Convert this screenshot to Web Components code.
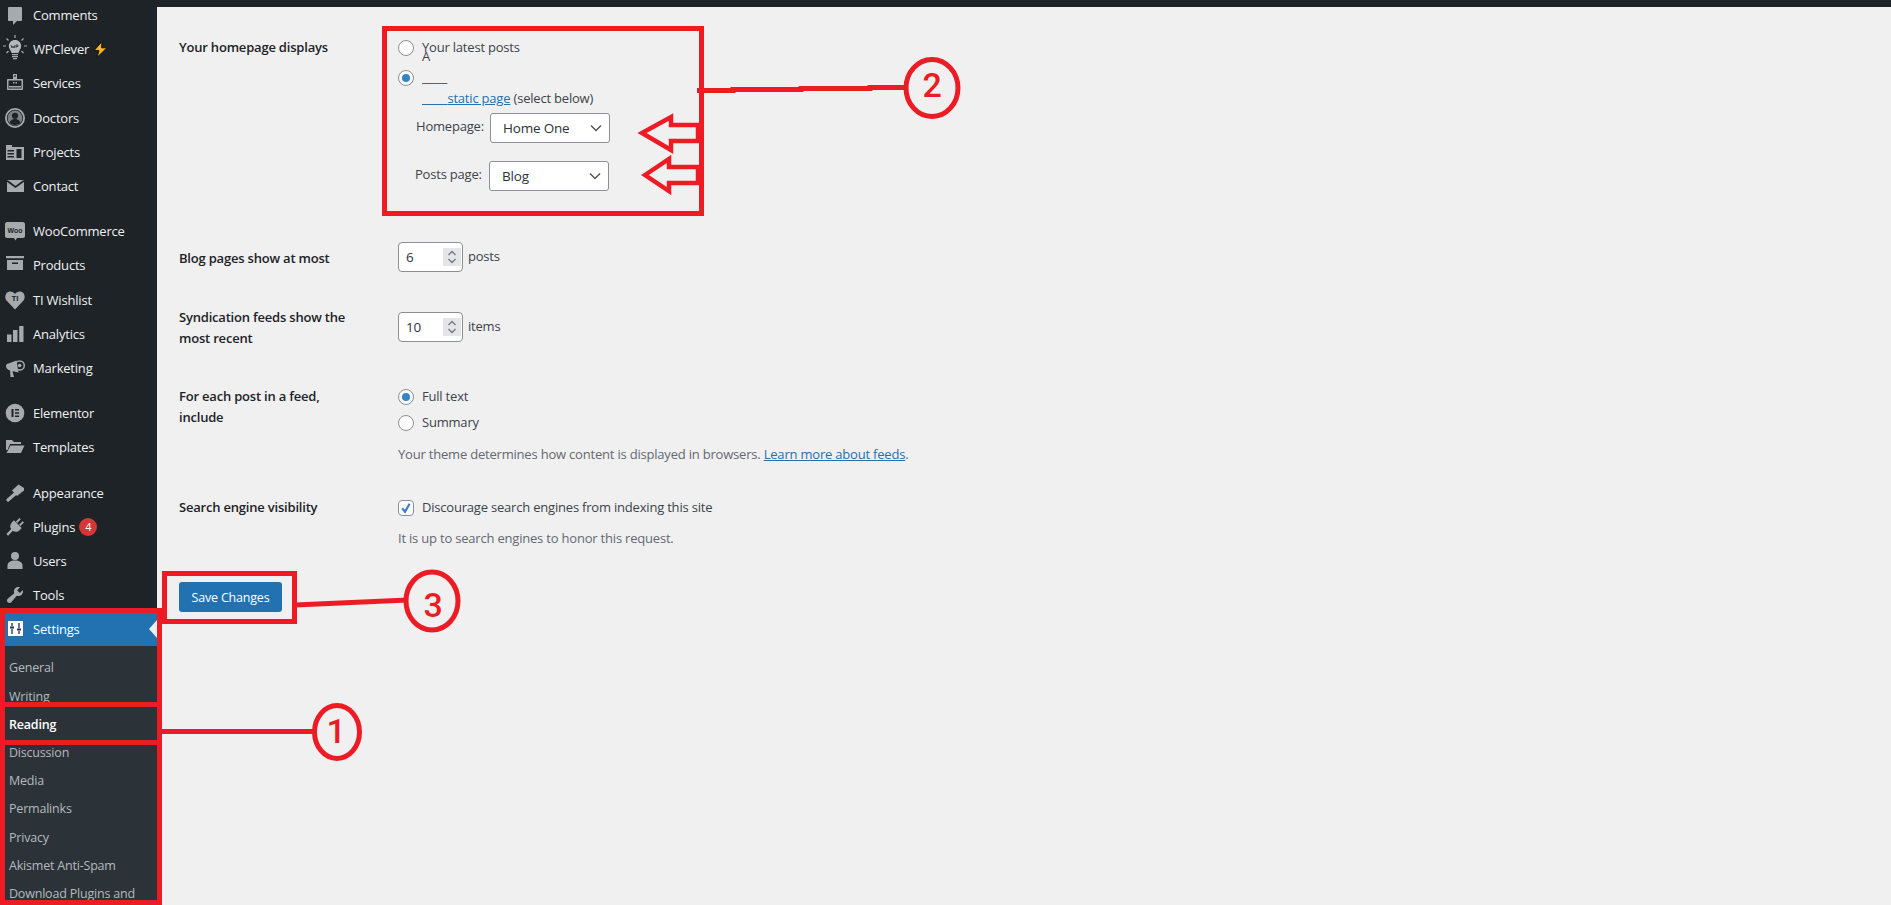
<!DOCTYPE html>
<html lang="en">
<head>
<meta charset="utf-8">
<title>Reading Settings</title>
<style>
  html, body { margin: 0; height: 100%; overflow: hidden; background: #f0f0f1; }
  body { font: 13px/21px "Open Sans", "Noto Sans", sans-serif; color: #3c434a; letter-spacing: -0.2px; }
</style>
</head>
<body>
<wp-admin>
  <wp-sidebar slot="side">
    <wp-menu-item icon="comments" style="margin-top:-2px">Comments</wp-menu-item>
    <wp-menu-item icon="wpclever">WPClever<svg slot="after" width="15" height="17" viewBox="0 0 15 17"><path d="M9 .6 1 9.6h5L4 16.4l10-9.600H8.600z" fill="#fbb62c" stroke="#111" stroke-width="1"/></svg></wp-menu-item>
    <wp-menu-item icon="services">Services</wp-menu-item>
    <wp-menu-item icon="doctors">Doctors</wp-menu-item>
    <wp-menu-item icon="projects">Projects</wp-menu-item>
    <wp-menu-item icon="contact">Contact</wp-menu-item>
    <wp-menu-sep></wp-menu-sep>
    <wp-menu-item icon="woo">WooCommerce</wp-menu-item>
    <wp-menu-item icon="products">Products</wp-menu-item>
    <wp-menu-item icon="wishlist">TI Wishlist</wp-menu-item>
    <wp-menu-item icon="analytics">Analytics</wp-menu-item>
    <wp-menu-item icon="marketing">Marketing</wp-menu-item>
    <wp-menu-sep></wp-menu-sep>
    <wp-menu-item icon="elementor">Elementor</wp-menu-item>
    <wp-menu-item icon="templates">Templates</wp-menu-item>
    <wp-menu-sep></wp-menu-sep>
    <wp-menu-item icon="appearance">Appearance</wp-menu-item>
    <wp-menu-item icon="plugins">Plugins<wp-count slot="after">4</wp-count></wp-menu-item>
    <wp-menu-item icon="users">Users</wp-menu-item>
    <wp-menu-item icon="tools">Tools</wp-menu-item>
    <wp-menu-item icon="settings" current>Settings</wp-menu-item>
    <wp-submenu>
      <wp-submenu-item>General</wp-submenu-item>
      <wp-submenu-item>Writing</wp-submenu-item>
      <wp-submenu-item current>Reading</wp-submenu-item>
      <wp-submenu-item>Discussion</wp-submenu-item>
      <wp-submenu-item>Media</wp-submenu-item>
      <wp-submenu-item>Permalinks</wp-submenu-item>
      <wp-submenu-item>Privacy</wp-submenu-item>
      <wp-submenu-item>Akismet Anti-Spam</wp-submenu-item>
      <wp-submenu-item>Download Plugins and</wp-submenu-item>
    </wp-submenu>
  </wp-sidebar>

  <wp-form-row label="Your homepage displays" style="margin-top:30px">
    <wp-radio>Your latest posts</wp-radio>
    <wp-radio checked style="margin-top:9px">A <wp-link>static page</wp-link> (select below)</wp-radio>
    <wp-page-select label="Homepage:" value="Home One" style="margin-top:25px"></wp-page-select>
    <wp-page-select label="Posts page:" value="Blog" style="margin-top:18px;margin-left:-1px"></wp-page-select>
  </wp-form-row>

  <wp-form-row label="Blog pages show at most" label-top="6" style="margin-top:51px">
    <wp-number value="6">posts</wp-number>
  </wp-form-row>

  <wp-form-row label="Syndication feeds show the most recent" style="margin-top:35px">
    <wp-number value="10" style="margin-top:5px">items</wp-number>
  </wp-form-row>

  <wp-form-row label="For each post in a feed, include" style="margin-top:37px">
    <wp-radio checked>Full text</wp-radio>
    <wp-radio style="margin-top:5px">Summary</wp-radio>
    <wp-note style="margin-top:11px">Your theme determines how content is displayed in browsers. <wp-link>Learn more about feeds</wp-link>.</wp-note>
  </wp-form-row>

  <wp-form-row label="Search engine visibility" style="margin-top:32px">
    <wp-checkbox checked>Discourage search engines from indexing this site</wp-checkbox>
    <wp-note style="margin-top:10px">It is up to search engines to honor this request.</wp-note>
  </wp-form-row>

  <wp-button style="margin-top:33px">Save Changes</wp-button>
  <wp-annotations slot="over"></wp-annotations>
</wp-admin>

<script>
(function () {
  'use strict';

  // iconos del menu lateral, caja de 20x20
  var ICONS = {
    comments: '<path d="M4 2h12c.6 0 1 .4 1 1v12c0 .6-.4 1-1 1h-4l-4 4v-4H4c-.6 0-1-.4-1-1V3c0-.6.4-1 1-1z"/>',
    wpclever: '<g stroke="#a7aaad" stroke-width="1.200" fill="none"><path d="M10 -4v3M1.500 -.5l2 2M18.500 -.5l-2 2M-2 7h3M19 7h3M1.500 14l2-2M18.500 14l-2-2"/></g><path d="M10 1c3.700 0 6.200 2.700 6.200 6 0 3-2.200 4.200-2.700 7H6.500C6 11.200 3.800 10 3.800 7c0-3.300 2.500-6 6.200-6z" fill="#b5b8ba"/><path d="M7 15h6v1.300H7zM7 17h6v1.300H7zM8 19h4v1.200H8z" fill="#a7aaad"/><path d="M6 6l1 3 1-2 1 2 1-3M11 9V6h2v1.500h-2" stroke="#1d2327" stroke-width=".7" fill="none"/>',
    services: '<path d="M8 1h4v5H8zM9.200 2.300v1.400h1.600V2.300z" fill-rule="evenodd"/><path d="M3 6h14c.6 0 1 .4 1 1v9c0 .6-.4 1-1 1H3c-.6 0-1-.4-1-1V7c0-.6.4-1 1-1zm.500 1.500v8h13v-8z" fill-rule="evenodd"/><path d="M4 13h12v1.500H4zM8 9h1.500v1.500H8zM10.500 9H12v1.500h-1.500z"/>',
    doctors: '<path d="M10 0a10 10 0 1 0 0 20 10 10 0 0 0 0-20zm0 1.800a8.200 8.200 0 1 1 0 16.400 8.200 8.200 0 0 1 0-16.400z" fill-rule="evenodd"/><circle cx="10" cy="10" r="7.400" fill="#7c8186"/><circle cx="10" cy="7.800" r="3.100" fill="#1d2327"/><path d="M4.500 15c.6-2.800 2.700-4 5.500-4s4.900 1.200 5.500 4c-1.500 1.300-3.400 2-5.500 2s-4-.7-5.500-2z" fill="#1d2327"/>',
    projects: '<path d="M1 3h6v2h12v13H1z"/><path d="M2.500 8h6.500v1.600H2.500zM2.500 11h6.500v1.600H2.500zM2.500 14h6.500v1.600H2.500zM11.500 7h5v9h-5z" fill="#1d2327"/>',
    contact: '<path d="M2 4h17v12H2z"/><path d="M2 4.800 10.500 11 19 4.800" fill="none" stroke="#1d2327" stroke-width="1.700"/>',
    woo: '<path d="M2 1h16c1 0 2 1 2 2v12c0 1-1 2-2 2h-6l-1.500 2.500L9 17H2c-1 0-2-1-2-2V3c0-1 1-2 2-2z"/><text x="10" y="11.800" text-anchor="middle" font-family="Liberation Sans, sans-serif" font-weight="700" font-size="7" letter-spacing="0" fill="#1d2327">Woo</text>',
    products: '<path d="M1 1h18v2.200H1zM2 5h16v10H2z"/><path d="M7 7.500h6v1.500H7z" fill="#1d2327"/>',
    wishlist: '<path d="M10 19.500 1.500 10.500C-1 7.500.5 1.500 5 1.500c2.400 0 4 1 5 2.500 1-1.500 2.600-2.500 5-2.500 4.500 0 6 6 3.500 9z"/><text x="10" y="11" text-anchor="middle" font-family="Liberation Sans, sans-serif" font-weight="700" font-size="8" letter-spacing="0" fill="#1d2327">TI</text>',
    analytics: '<path d="M2 10.500h4.500V18H2zM8 6h4.500v12H8zM14.200 2H18.500v16h-4.300z"/>',
    marketing: '<path d="M1 8c0-1.500 1-2.500 2.500-2.500l8-3 2 12-5.500-1.300-.5 .3L9 19H5.500L5 12.500C2.500 12 1 10 1 8z"/><circle cx="14.700" cy="7.500" r="4.600" fill="none" stroke="#a7aaad" stroke-width="1.500"/><circle cx="14.700" cy="7.500" r="1.800"/>',
    elementor: '<circle cx="10" cy="10" r="9.300"/><path d="M6.500 6h2v8h-2zM10 6h4v1.600h-4zM10 9.200h4v1.600h-4zM10 12.400h4V14h-4z" fill="#1d2327"/>',
    templates: '<path d="M1 3h6l2 2h7v2H5L2.500 13H1z"/><path d="M5.500 8.500H19.500L16 16H1.500z"/>',
    appearance: '<path d="M19 5 13.500 1.500 7 7.500 12 13 19 7.500z"/><path d="M10.500 10.500 3 17" stroke="#a7aaad" stroke-width="3.400" stroke-linecap="round" fill="none"/>',
    plugins: '<g transform="rotate(45 10 10)"><path d="M6.800 .5h1.900v5H6.800zM11.300 .5h1.900v5h-1.900zM4.500 6h11v3c0 3-2.200 5-4.300 5.200V21H8.800v-6.800C6.700 14 4.500 12 4.500 9z"/></g>',
    users: '<circle cx="10" cy="5" r="4"/><path d="M2.500 18v-3.500c0-3 3-5 7.500-5s7.500 2 7.500 5V18z"/>',
    tools: '<path d="M16.680 9.770c-1.340 1.340-3.300 1.670-4.950.99l-5.410 6.520c-.99.990-2.590.990-3.580 0s-.99-2.590 0-3.580l6.520-5.410c-.68-1.650-.35-3.610.99-4.950 1.280-1.280 3.120-1.620 4.720-1.060l-2.890 2.890 2.820 2.820 2.860-2.870c.530 1.580.18 3.390-1.080 4.650z"/>',
    settings: '<path d="M3 2h15v15H3z" fill="#fff"/><path d="M7 4v3M7 10v5M14 4v5M14 12v3" stroke="#3b3f8f" stroke-width="1.500"/><path d="M5 8.500h4M12 10.500h4" stroke="#2a2a40" stroke-width="1.800"/>'
  };

  class WpAdmin extends HTMLElement {
    constructor() {
      super();
      this.attachShadow({ mode: 'open' }).innerHTML = `
        <style>
          :host { display: block; position: relative; width: 1891px; height: 905px; overflow: hidden; }
          .layout { display: flex; height: 100%; }
          .main { flex: 1; display: flex; flex-direction: column; }
          .topbar { height: 7px; background: #1d2327; flex: none; }
          .content { padding-left: 22px; display: flex; flex-direction: column; align-items: flex-start; }
        </style>
        <div class="layout">
          <slot name="side"></slot>
          <div class="main">
            <div class="topbar"></div>
            <div class="content"><slot></slot></div>
          </div>
        </div>
        <slot name="over"></slot>`;
    }
  }

  class WpSidebar extends HTMLElement {
    constructor() {
      super();
      this.attachShadow({ mode: 'open' }).innerHTML = `
        <style>
          :host { display: flex; flex-direction: column; flex: none; width: 157px; height: 905px; background: #1d2327; overflow: hidden; }
        </style>
        <slot></slot>`;
    }
  }

  class WpMenuItem extends HTMLElement {
    constructor() {
      super();
      this.attachShadow({ mode: 'open' });
    }
    connectedCallback() {
      var icon = ICONS[this.getAttribute('icon')] || '';
      this.shadowRoot.innerHTML = `
        <style>
          :host { display: flex; align-items: center; flex: none; height: 34.2px; color: #f0f0f1; position: relative; line-height: 18px; }
          :host([current]) { background: #2271b1; color: #fff; }
          :host([current])::after {
            content: ""; position: absolute; right: 0; top: 8px;
            border: 9px solid transparent; border-right: 8px solid #f0f0f1; border-left: 0;
          }
          svg.ico { width: 20px; height: 20px; margin: 0 8px 0 5px; fill: #a7aaad; overflow: visible; flex: none; }
          ::slotted([slot=after]) { margin-left: 4px; }
        </style>
        <svg class="ico" viewBox="0 0 20 20">${icon}</svg>
        <slot></slot><slot name="after"></slot>`;
    }
  }

  class WpMenuSep extends HTMLElement {
    constructor() {
      super();
      this.attachShadow({ mode: 'open' }).innerHTML = '<style>:host { display: block; flex: none; height: 11px; }</style>';
    }
  }

  class WpCount extends HTMLElement {
    constructor() {
      super();
      this.attachShadow({ mode: 'open' }).innerHTML = `
        <style>
          :host { display: inline-flex; align-items: center; justify-content: center; width: 18px; height: 18px; border-radius: 50%; background: #d63638; color: #fff; font-size: 11px; margin-left: 6px; }
        </style>
        <slot></slot>`;
    }
  }

  class WpSubmenu extends HTMLElement {
    constructor() {
      super();
      this.attachShadow({ mode: 'open' }).innerHTML = `
        <style>
          :host { display: block; flex: none; background: #2c3338; padding: 7.500px 0 7px; }
        </style>
        <slot></slot>`;
    }
  }

  class WpSubmenuItem extends HTMLElement {
    constructor() {
      super();
      this.attachShadow({ mode: 'open' }).innerHTML = `
        <style>
          :host { display: flex; align-items: center; height: 28.200px; padding-left: 9px; color: #b4b9be; white-space: nowrap; font-size: 12.500px; }
          :host([current]) { color: #fff; font-weight: 600; }
        </style>
        <slot></slot>`;
    }
  }

  class WpFormRow extends HTMLElement {
    constructor() {
      super();
      this.attachShadow({ mode: 'open' });
    }
    connectedCallback() {
      var top = this.getAttribute('label-top') || 0;
      this.shadowRoot.innerHTML = `
        <style>
          :host { display: grid; grid-template-columns: 219px 1fr; align-items: start; }
          .label { color: #1d2327; font-weight: 600; padding-top: ${top}px; width: 180px; }
          .field { display: flex; flex-direction: column; align-items: flex-start; }
        </style>
        <div class="label">${this.getAttribute('label')}</div>
        <div class="field"><slot></slot></div>`;
    }
  }

  class WpRadio extends HTMLElement {
    constructor() {
      super();
      this.attachShadow({ mode: 'open' }).innerHTML = `
        <style>
          :host { display: flex; align-items: center; gap: 8px; height: 21px; }
          .dot { width: 16px; height: 16px; box-sizing: border-box; border: 1px solid #8c8f94; border-radius: 50%; background: #fff; display: flex; align-items: center; justify-content: center; }
          :host([checked]) .dot::before { content: ""; width: 8px; height: 8px; border-radius: 50%; background: #3582c4; }
          .txt { white-space: pre; }
        </style>
        <span class="dot"></span><span class="txt"><slot></slot></span>`;
    }
  }

  class WpCheckbox extends HTMLElement {
    constructor() {
      super();
      this.attachShadow({ mode: 'open' }).innerHTML = `
        <style>
          :host { display: flex; align-items: center; gap: 8px; height: 21px; }
          .box { width: 16px; height: 16px; box-sizing: border-box; border: 1px solid #8c8f94; border-radius: 4px; background: #fff; display: flex; }
          svg { width: 14px; height: 14px; }
        </style>
        <span class="box"><svg viewBox="0 0 14 14"><path d="M3.200 7.300 6 10.800 10.600 2.800" fill="none" stroke="#3582c4" stroke-width="2.200"/></svg></span>
        <span><slot></slot></span>`;
    }
  }

  class WpLink extends HTMLElement {
    constructor() {
      super();
      this.attachShadow({ mode: 'open' }).innerHTML = `
        <style>:host { display: inline; color: #2271b1; text-decoration: underline; }</style>
        <slot></slot>`;
    }
  }

  class WpNote extends HTMLElement {
    constructor() {
      super();
      this.attachShadow({ mode: 'open' }).innerHTML = `
        <style>:host { display: block; color: #646970; white-space: nowrap; }</style>
        <slot></slot>`;
    }
  }

  class WpPageSelect extends HTMLElement {
    constructor() {
      super();
      this.attachShadow({ mode: 'open' });
    }
    connectedCallback() {
      this.shadowRoot.innerHTML = `
        <style>
          :host { display: flex; align-items: center; height: 30px; padding-left: 18px; }
          .lab { width: 74px; flex: none; margin-top: -4px; white-space: nowrap; }
          .sel { width: 120px; height: 30px; box-sizing: border-box; border: 1px solid #8c8f94; border-radius: 3px; background: #fff; color: #2c3338; padding: 0 7px 0 12px; display: flex; align-items: center; justify-content: space-between; font-size: 13.500px; }
          svg { width: 12px; height: 8px; }
        </style>
        <span class="lab">${this.getAttribute('label')}</span>
        <span class="sel"><span>${this.getAttribute('value')}</span>
          <svg viewBox="0 0 12 8"><path d="M1 1.500 6 6.500 11 1.500" fill="none" stroke="#50575e" stroke-width="1.500"/></svg></span>`;
    }
  }

  class WpNumber extends HTMLElement {
    constructor() {
      super();
      this.attachShadow({ mode: 'open' });
    }
    connectedCallback() {
      this.shadowRoot.innerHTML = `
        <style>
          :host { display: flex; align-items: center; gap: 5px; height: 30px; }
          .inp { width: 65px; height: 30px; box-sizing: border-box; border: 1px solid #8c8f94; border-radius: 4px; background: #fff; color: #2c3338; padding: 0 1px 0 7px; display: flex; align-items: center; justify-content: space-between; font-size: 13.500px; }
          .spin { width: 18px; height: 18px; background: #e4e4e9; display: flex; margin-right: 0; }
          svg { width: 18px; height: 18px; }
          .unit { margin-top: -1px; }
        </style>
        <span class="inp"><span>${this.getAttribute('value')}</span>
          <span class="spin"><svg viewBox="0 0 18 18"><path d="M5.500 7 9 3.500 12.500 7M5.500 11 9 14.500 12.500 11" fill="none" stroke="#76797e" stroke-width="1.400"/></svg></span></span>
        <span class="unit"><slot></slot></span>`;
    }
  }

  class WpButton extends HTMLElement {
    constructor() {
      super();
      this.attachShadow({ mode: 'open' }).innerHTML = `
        <style>
          :host { display: inline-flex; align-items: center; justify-content: center; width: 103px; height: 30px; background: #2271b1; border-radius: 3px; color: #fff; white-space: nowrap; font-size: 12.500px; }
        </style>
        <slot></slot>`;
    }
  }

  // marcas rojas encima de la captura: cajas, flechas y numeros
  class WpAnnotations extends HTMLElement {
    constructor() {
      super();
      this.attachShadow({ mode: 'open' }).innerHTML = `
        <style>
          :host { position: absolute; left: 0; top: 0; display: block; width: 1891px; height: 905px; pointer-events: none; }
          svg { display: block; }
          .s { fill: none; stroke: #ed1c24; stroke-width: 5; }
          .a { fill: none; stroke: #ed1c24; stroke-width: 4.500; }
          text { fill: #ed1c24; font: 500 34px Roboto, sans-serif; text-anchor: middle; }
        </style>
        <svg width="1891" height="905" viewBox="0 0 1891 905">
          <rect class="s" x="2.500" y="610.500" width="157" height="292"/>
          <path class="s" d="M0 704.500H162M0 742.500H162"/>
          <rect class="s" x="164.500" y="573.500" width="130" height="48"/>
          <rect class="s" x="384.500" y="28.500" width="317" height="185"/>
          <path class="s" d="M697 90.500H733V89.500H801V88.500H870V87.500H908"/>
          <path class="s" d="M295 605L408 600"/>
          <path class="s" d="M160 731.500H315"/>
          <path class="a" d="M642 133 671 117V125H698V141H671V150z"/>
          <path class="a" d="M645 175 669 159V167H698V183H669V191z"/>
          <ellipse class="s" cx="337" cy="732" rx="22.500" ry="26.500"/>
          <ellipse class="s" cx="932" cy="88" rx="26" ry="28.500"/>
          <ellipse class="s" cx="432" cy="601" rx="26" ry="29"/>
          <text x="336" y="743">1</text>
          <text x="932" y="97">2</text>
          <text x="433" y="617">3</text>
        </svg>`;
    }
  }

  customElements.define('wp-admin', WpAdmin);
  customElements.define('wp-sidebar', WpSidebar);
  customElements.define('wp-menu-item', WpMenuItem);
  customElements.define('wp-menu-sep', WpMenuSep);
  customElements.define('wp-count', WpCount);
  customElements.define('wp-submenu', WpSubmenu);
  customElements.define('wp-submenu-item', WpSubmenuItem);
  customElements.define('wp-form-row', WpFormRow);
  customElements.define('wp-radio', WpRadio);
  customElements.define('wp-checkbox', WpCheckbox);
  customElements.define('wp-link', WpLink);
  customElements.define('wp-note', WpNote);
  customElements.define('wp-page-select', WpPageSelect);
  customElements.define('wp-number', WpNumber);
  customElements.define('wp-button', WpButton);
  customElements.define('wp-annotations', WpAnnotations);
})();
</script>
</body>
</html>
